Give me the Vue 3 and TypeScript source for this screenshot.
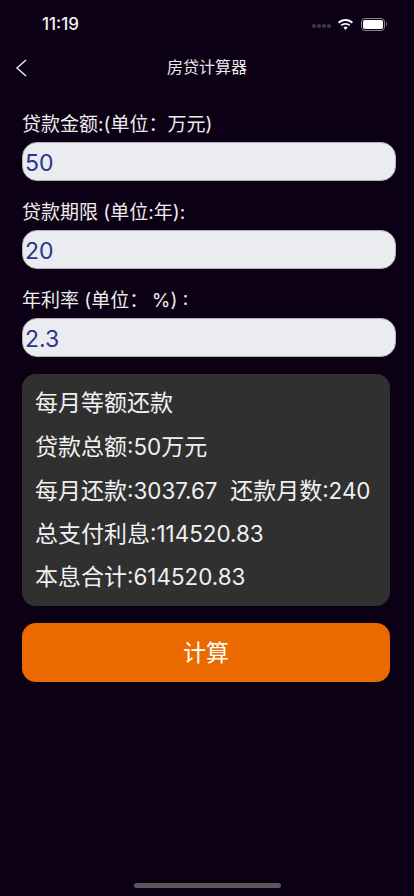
<script setup lang="ts">
import { ref } from 'vue'
const amount = ref('50')
const years = ref('20')
const rate = ref('2.3')
</script>

<template>
  <div class="page">
    <div class="status">
      <span class="time">11:19</span>
      <div class="status-icons">
        <div class="dots"><i></i><i></i><i></i><i></i></div>
        <svg class="wifi" width="17" height="13" viewBox="0 0 17 12">
          <path fill="#fff" d="M8.5 2.4c2.4 0 4.6.9 6.3 2.5l1.2-1.3C14 1.6 11.4.5 8.5.5S3 1.6 1 3.6l1.2 1.3c1.7-1.6 3.9-2.5 6.3-2.5z"/>
          <path fill="#fff" d="M8.5 6.2c1.4 0 2.6.5 3.6 1.4l1.2-1.3C12 5.1 10.3 4.4 8.5 4.4s-3.5.7-4.8 1.9l1.2 1.3c1-.9 2.2-1.4 3.6-1.4z"/>
          <path fill="#fff" d="M8.5 8.1c-.8 0-1.5.3-2 .8l2 2.6 2-2.6c-.5-.5-1.2-.8-2-.8z"/>
        </svg>
        <div class="battery"><div class="battery-fill"></div></div>
        <div class="battery-cap"></div>
      </div>
    </div>
    <header class="nav">
      <svg class="back" width="12" height="18" viewBox="0 0 12 18">
        <path d="M11 1 2 9l9 8" fill="none" stroke="#e8e8e8" stroke-width="1.5"/>
      </svg>
      <h1 class="title">房贷计算器</h1>
    </header>
    <main class="content">
      <label class="field">
        <span class="label">贷款金额:(单位：万元)</span>
        <input v-model="amount" class="input" />
      </label>
      <label class="field">
        <span class="label">贷款期限 (单位:年):</span>
        <input v-model="years" class="input" />
      </label>
      <label class="field">
        <span class="label">年利率 (单位：&#8201;%) :</span>
        <input v-model="rate" class="input" />
      </label>
      <section class="card">
        <p>每月等额还款</p>
        <p>贷款总额<span class="num">:50</span>万元</p>
        <p>每月还款<span class="num">:3037.67&nbsp; </span>还款月数<span class="num">:240</span></p>
        <p>总支付利息<span class="num">:114520.83</span></p>
        <p>本息合计<span class="num">:614520.83</span></p>
      </section>
      <button class="calc">计算</button>
    </main>
    <div class="home"></div>
  </div>
</template>

<style scoped>
.page {
  position: relative;
  width: 414px;
  height: 896px;
  overflow: hidden;
  background: #0c0014;
  color: #fff;
  font-family: Inter, "Noto Sans CJK SC", sans-serif;
}
.status {
  height: 44px;
  display: flex;
  align-items: center;
  justify-content: space-between;
  padding: 4px 27px 0 42px;
  box-sizing: border-box;
}
.time {
  font-size: 17px;
  font-weight: 500;
  color: #f2f2f2;
}
.status-icons {
  display: flex;
  align-items: center;
}
.dots {
  display: flex;
  gap: 1px;
  margin-right: 6px;
  margin-top: 3px;
}
.dots i {
  width: 4px;
  height: 4px;
  border-radius: 50%;
  background: #3f3a45;
}
.wifi {
  margin-right: 7px;
}
.battery {
  width: 24px;
  height: 13px;
  box-sizing: border-box;
  border: 1px solid #8a8790;
  border-radius: 4px;
  padding: 1px;
}
.battery-fill {
  width: 100%;
  height: 100%;
  background: #fff;
  border-radius: 2px;
}
.battery-cap {
  width: 1.5px;
  height: 4px;
  margin-left: 1px;
  background: #77737c;
  border-radius: 0 1px 1px 0;
}
.nav {
  position: relative;
  height: 44px;
  display: flex;
  align-items: center;
  justify-content: center;
}
.back {
  position: absolute;
  left: 15px;
  top: 15px;
}
.title {
  margin: 0;
  font-size: 16px;
  font-weight: 400;
  color: #e9e9e9;
}
.content {
  display: flex;
  flex-direction: column;
  padding: 22px 18px 0 22px;
}
.field {
  display: flex;
  flex-direction: column;
  margin-bottom: 17px;
}
.label {
  height: 28px;
  line-height: 30px;
  margin-bottom: 4px;
  font-size: 19px;
  color: #ececec;
  white-space: nowrap;
}
.input {
  height: 39px;
  box-sizing: border-box;
  padding: 2px 2px 0;
  border: 1px solid #b4b2b9;
  border-radius: 15px;
  outline: none;
  background: #ebecf0;
  color: #2a3587;
  font-family: inherit;
  font-size: 23px;
}
.card {
  box-sizing: border-box;
  width: 368px;
  height: 232px;
  padding: 8px 13px;
  border-radius: 14px;
  background: #303030;
}
.card p {
  margin: 0;
  height: 43.25px;
  line-height: 43px;
  font-size: 23px;
  color: #f0f0f0;
  white-space: nowrap;
}
.num {
  font-size: 22.4px;
}
.calc {
  width: 368px;
  height: 59px;
  margin-top: 17px;
  padding: 0 0 4px;
  border: 0;
  border-radius: 14px;
  background: #ea6a00;
  color: #fff;
  font-family: inherit;
  font-size: 23px;
}
.home {
  position: absolute;
  left: 134px;
  bottom: 8px;
  width: 147px;
  height: 5px;
  border-radius: 3px;
  background: #5a585a;
}
</style>
